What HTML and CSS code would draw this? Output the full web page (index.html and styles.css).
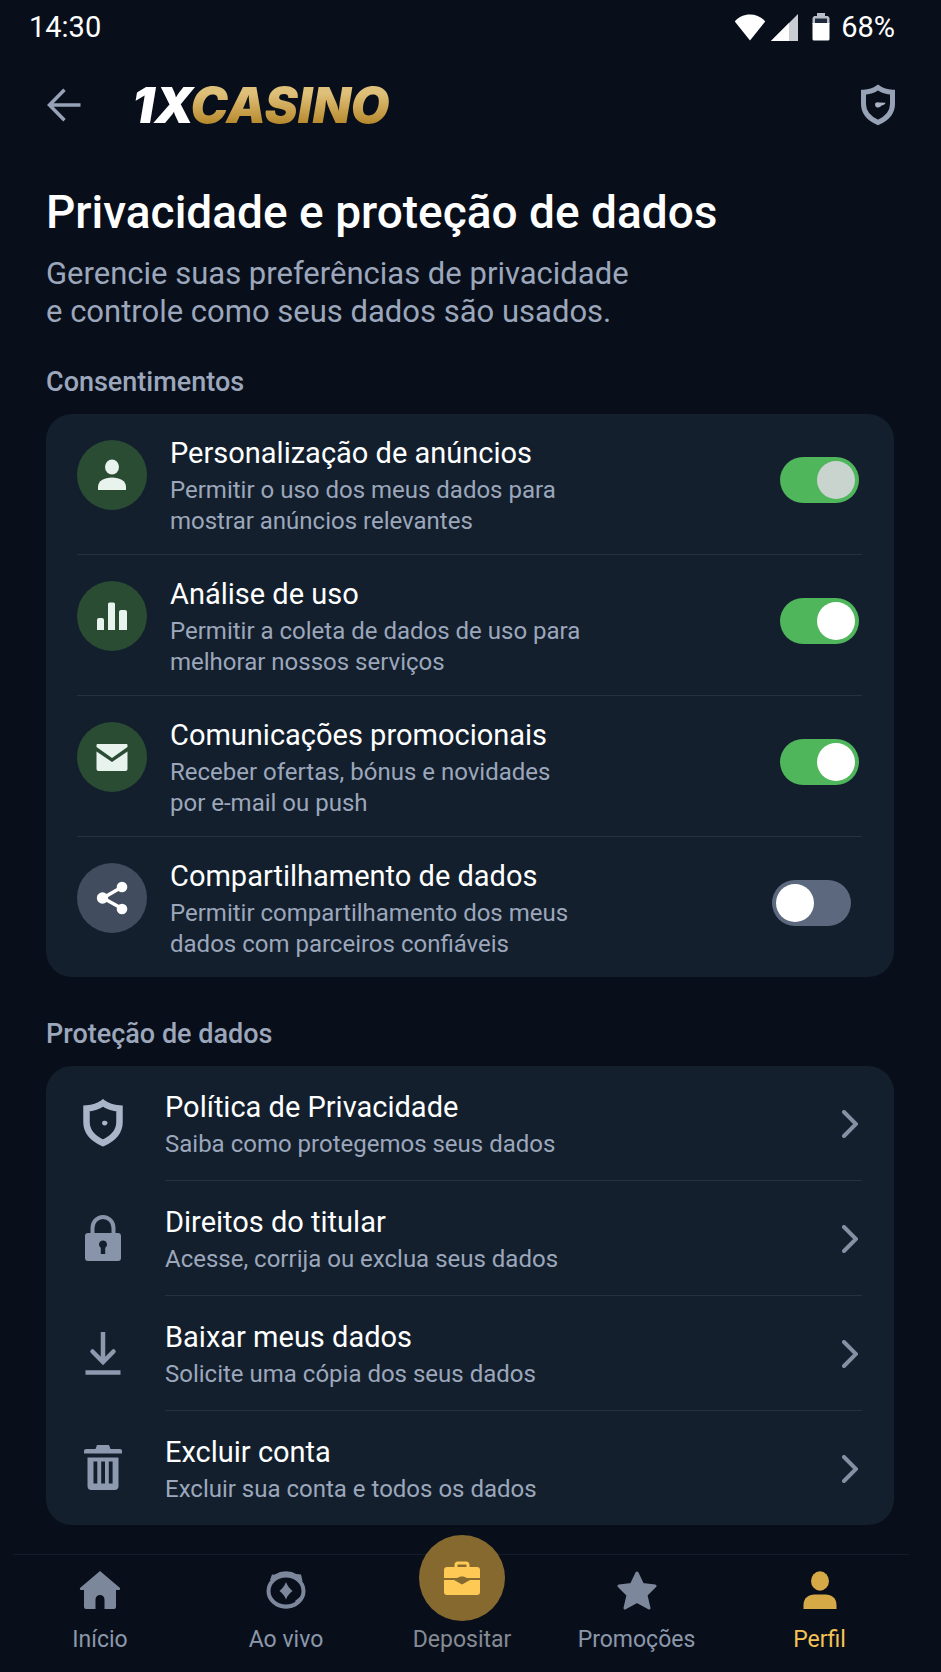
FILE: index.html
```html
<!DOCTYPE html>
<html lang="pt">
<head>
    <meta charset="UTF-8">
    <meta name="viewport" content="width=device-width, initial-scale=1.0">
    <title>Privacidade e proteção de dados</title>
    <link rel="stylesheet" href="styles.css">
</head>
<body>
    <div class="status-bar">
        <span>14:30</span>
        <div class="status-icons">
            <svg class="wifi" width="32" height="27" viewBox="0 0 32 27"><path d="M16 26.500L.8 7.500C4.500 2.800 10 .5 16 .5s11.500 2.300 15.200 7z" fill="#fff"/></svg>
            <svg class="signal" width="27" height="27" viewBox="0 0 27 27"><path d="M0 27L27 0v27z" fill="#c9ccd3"/><path d="M0 27L18 9v18z" fill="#fff"/></svg>
            <svg class="battery" width="18" height="28" viewBox="0 0 18 28"><path d="M5 0h8v3h3l1.500 2v6H.5V5L2 3h3z" fill="#b9bec8"/><path d="M3 5.500h12v5H3z" fill="#1d2a3c"/><path d="M.5 10h17v16a1.500 1.500 0 0 1-1.500 1.500H2A1.500 1.500 0 0 1 .5 26z" fill="#fff"/></svg>
            <span>68%</span>
        </div>
    </div>

    <header class="top-bar">
        <button class="icon-button" aria-label="Voltar">
            <svg width="36" height="36" viewBox="0 0 36 36" fill="none" stroke="#97a2b7" stroke-width="3.500"><path d="M34.500 18H4M18.500 2.800L3.500 18l15 15.200"/></svg>
        </button>
        <div class="logo"><span class="logo-mark">1X</span><span class="logo-name">CASINO</span></div>
        <button class="icon-button shield-button" aria-label="Segurança">
            <svg width="36" height="42" viewBox="0 0 36 42"><path d="M18 3.500C14 6.500 9 8 3.500 8.200V20c0 8.500 5.500 14.500 14.500 18.500C27 34.500 32.500 28.500 32.500 20V8.200C27 8 22 6.500 18 3.500z" fill="none" stroke="#97a2b7" stroke-width="5"/><path d="M15 20.500c0-2 2-2.500 4-2l6.500.3c-.5 2-2.500 2.500-4 2.700-1 1.500-2.500 2-4 2s-2.500-1.500-2.500-3z" fill="#a9b3c5"/></svg>
        </button>
    </header>

    <main>
        <h1>Privacidade e proteção de dados</h1>
        <p class="intro">Gerencie suas preferências de privacidade<br>e controle como seus dados são usados.</p>

        <section>
            <h2>Consentimentos</h2>
            <div class="card">
                <label class="consent">
                    <span class="badge">
                        <svg width="30" height="32" viewBox="0 0 30 32" fill="#e9f3ee"><ellipse cx="15" cy="8" rx="7" ry="7.500"/><path d="M1 31v-3c0-6 6-9.500 14-9.500S29 22 29 28v3z"/></svg>
                    </span>
                    <span class="text">
                        <span class="title">Personalização de anúncios</span>
                        <span class="desc">Permitir o uso dos meus dados para<br>mostrar anúncios relevantes</span>
                    </span>
                    <input type="checkbox" class="switch switch-muted" checked>
                </label>
                <label class="consent">
                    <span class="badge">
                        <svg width="30" height="28" viewBox="0 0 30 28" fill="#e9f3ee"><path d="M0 28V18q0-2 2-2h3q2 0 2 2v10zM11 28V2q0-1.500 1.500-1.500h4Q18 .5 18 2v26zM22 28V10q0-2 2-2h4q2 0 2 2v18z"/></svg>
                    </span>
                    <span class="text">
                        <span class="title">Análise de uso</span>
                        <span class="desc">Permitir a coleta de dados de uso para<br>melhorar nossos serviços</span>
                    </span>
                    <input type="checkbox" class="switch" checked>
                </label>
                <label class="consent">
                    <span class="badge">
                        <svg width="32" height="27" viewBox="0 0 32 27" fill="#e9f3ee"><path d="M1.500 0h29q1 0 1 1v2L16 14 .5 3V1q0-1 1-1z"/><path d="M.5 7.500L16 18 31.500 7.500V25q0 2-2 2h-27q-2 0-2-2z"/></svg>
                    </span>
                    <span class="text">
                        <span class="title">Comunicações promocionais</span>
                        <span class="desc">Receber ofertas, bónus e novidades<br>por e-mail ou push</span>
                    </span>
                    <input type="checkbox" class="switch" checked>
                </label>
                <label class="consent">
                    <span class="badge badge-gray">
                        <svg width="32" height="34" viewBox="0 0 32 34"><path d="M26 6L7 17l19 10.500" fill="none" stroke="#fff" stroke-width="3.500"/><g fill="#fff"><circle cx="26" cy="6" r="5.300"/><circle cx="6.500" cy="17" r="5.700"/><circle cx="26" cy="28" r="5.300"/></g></svg>
                    </span>
                    <span class="text">
                        <span class="title">Compartilhamento de dados</span>
                        <span class="desc">Permitir compartilhamento dos meus<br>dados com parceiros confiáveis</span>
                    </span>
                    <input type="checkbox" class="switch">
                </label>
            </div>
        </section>

        <section>
            <h2>Proteção de dados</h2>
            <div class="card">
                <a class="link-row" href="#politica">
                    <span class="row-icon">
                        <svg width="40" height="48" viewBox="0 0 40 48"><path d="M20 4C15.500 7.300 10 9 3.500 9.500V23c0 9.500 6.500 16.500 16.500 21 10-4.500 16.500-11.500 16.500-21V9.500C30 9 24.500 7.300 20 4z" fill="none" stroke="#a9b5c8" stroke-width="6.500"/><path d="M19 23.500c0-1.500 2-1.800 3-1.800s2.500.8 2.500 2-1 2.800-2.800 2.800S19 25.500 19 23.500z" fill="#a9b5c8"/></svg>
                    </span>
                    <span class="row-body">
                        <span class="text">
                            <span class="title">Política de Privacidade</span>
                            <span class="desc">Saiba como protegemos seus dados</span>
                        </span>
                        <svg class="chevron" width="16" height="28" viewBox="0 0 16 28"><path d="M2 2l12 12L2 26"/></svg>
                    </span>
                </a>
                <a class="link-row" href="#direitos">
                    <span class="row-icon">
                        <svg width="38" height="46" viewBox="0 0 38 46"><path d="M8.500 20V13a10.500 11 0 0 1 21 0v7" fill="none" stroke="#8794a9" stroke-width="4"/><path d="M4 18h30q3 0 3 3v22q0 3-3 3H4q-3 0-3-3V21q0-3 3-3z" fill="#8794a9"/><path d="M19 25.500a4 4 0 0 1 2.200 7.300V39h-4.400v-6.200A4 4 0 0 1 19 25.500z" fill="#131f2d"/></svg>
                    </span>
                    <span class="row-body">
                        <span class="text">
                            <span class="title">Direitos do titular</span>
                            <span class="desc">Acesse, corrija ou exclua seus dados</span>
                        </span>
                        <svg class="chevron" width="16" height="28" viewBox="0 0 16 28"><path d="M2 2l12 12L2 26"/></svg>
                    </span>
                </a>
                <a class="link-row" href="#baixar">
                    <span class="row-icon">
                        <svg width="36" height="44" viewBox="0 0 36 44" fill="none" stroke="#8d99ae" stroke-width="4.500"><path d="M18 1v29" /><path d="M7.500 20.500L18 31l10.500-10.500" stroke-linecap="round"/><path d="M.5 41.500h35"/></svg>
                    </span>
                    <span class="row-body">
                        <span class="text">
                            <span class="title">Baixar meus dados</span>
                            <span class="desc">Solicite uma cópia dos seus dados</span>
                        </span>
                        <svg class="chevron" width="16" height="28" viewBox="0 0 16 28"><path d="M2 2l12 12L2 26"/></svg>
                    </span>
                </a>
                <a class="link-row" href="#excluir">
                    <span class="row-icon">
                        <svg width="38" height="46" viewBox="0 0 38 46"><path d="M13 0h12l1.500 4H36q2 0 2 2v2.500H0V6q0-2 2-2h9.500zM3.500 12.500h31V41q0 4-4 4h-23q-4 0-4-4z" fill="#8d99ae"/><path d="M9.500 16.500h3.800v22H9.500zM17.200 16.500H21v22h-3.800zM24.800 16.500h3.800v22h-3.800z" fill="#131f2d"/></svg>
                    </span>
                    <span class="row-body">
                        <span class="text">
                            <span class="title">Excluir conta</span>
                            <span class="desc">Excluir sua conta e todos os dados</span>
                        </span>
                        <svg class="chevron" width="16" height="28" viewBox="0 0 16 28"><path d="M2 2l12 12L2 26"/></svg>
                    </span>
                </a>
            </div>
        </section>
    </main>

    <nav class="bottom-nav">
        <a href="#inicio">
            <span class="nav-icon"><svg width="42" height="38" viewBox="0 0 42 38"><path d="M21 0l20 17q.8 2-1 2h-3v17q0 2-2 2h-9.500V28.500a4 4 0 0 0-9 0V38H7q-2 0-2-2V19H2q-1.800 0-1-2z" fill="#7c879c"/></svg></span>
            Início
        </a>
        <a href="#aovivo">
            <span class="nav-icon"><svg width="40" height="38" viewBox="0 0 40 38"><ellipse cx="20" cy="20" rx="17.500" ry="15.500" fill="none" stroke="#7c879c" stroke-width="4"/><path d="M9 5Q20-1.500 31 5" fill="none" stroke="#7c879c" stroke-width="3"/><path d="M10 33.500q10 5 20 0" fill="none" stroke="#7c879c" stroke-width="3"/><g fill="#7c879c"><path d="M6 3.500L11 4l-3 6-4-1zM35 3.500L30 3l2 6 4.500 1z"/><path d="M20 11c1.500 4 3.500 6.500 6.500 9-3 2.500-5 4.500-6.500 8.500-1.500-4-3.500-6-6.500-8.500 3-2.500 5-5 6.500-9zM29 30l5-4 1 3-4 3z"/></g></svg></span>
            Ao vivo
        </a>
        <a href="#depositar" class="deposit">
            <span class="nav-circle"><svg width="36" height="34" viewBox="0 0 36 34"><path d="M12 7V4Q12 2 14 2h8q2 0 2 2v3" fill="none" stroke="#fec955" stroke-width="3"/><path d="M3 6h30q3 0 3 3v8H23l-3.500-1.500h-3L13 17H0V9q0-3 3-3zM0 19h10l8 4.500 8-4.500h10v12q0 3-3 3H3q-3 0-3-3z" fill="#fec955"/></svg></span>
            Depositar
        </a>
        <a href="#promocoes">
            <span class="nav-icon"><svg width="40" height="39" viewBox="0 0 40 39"><path d="M20 2l5.500 11.500L38 15l-9 9 3 13-12-6.500L8 37l3-13-9-9 12.500-1.500z" fill="#7c879c" stroke="#7c879c" stroke-width="3" stroke-linejoin="round"/></svg></span>
            Promoções
        </a>
        <a href="#perfil" class="active">
            <span class="nav-icon"><svg width="34" height="38" viewBox="0 0 34 38" fill="#d6a947"><ellipse cx="17" cy="10" rx="9" ry="9.700"/><path d="M.5 38v-4c0-7 5-10.500 11-10.500h11c6 0 11 3.500 11 10.500v4z"/></svg></span>
            Perfil
        </a>
    </nav>
</body>
</html>
```

FILE: styles.css
```css
* {
    box-sizing: border-box;
}

body {
    margin: 0;
    min-height: 100vh;
    display: flex;
    flex-direction: column;
    font-family: Roboto, "Liberation Sans", sans-serif;
    background: #080f1b;
    color: #fff;
}

a {
    color: inherit;
    text-decoration: none;
}

svg {
    display: block;
    flex: none;
}

/* Status bar */
.status-bar {
    display: flex;
    justify-content: space-between;
    padding: 10px 46px 0 29px;
    font-size: 29px;
    line-height: 34px;
}

.status-icons {
    display: flex;
    align-items: center;
}

.signal {
    margin: 0 14px 0 5px;
}

.battery {
    margin-right: 11px;
}

/* Header */
.top-bar {
    display: flex;
    align-items: center;
    height: 60px;
    margin-top: 31px;
    padding: 0 45px 0 46px;
}

.icon-button {
    padding: 0;
    border: none;
    background: none;
    cursor: pointer;
}

.shield-button {
    margin-left: auto;
}

.logo {
    margin-left: 50px;
    font-family: Inter, "Open Sans", sans-serif;
    font-size: 50px;
    line-height: 60px;
    font-weight: 900;
    font-style: italic;
}

.logo-name {
    background: linear-gradient(#dfc07a 30%, #cda654 55%, #b78a2f 80%);
    background-clip: text;
    -webkit-background-clip: text;
    color: transparent;
}

/* Content */
main {
    flex: 1;
    padding: 50px 47px 29px 46px;
}

h1 {
    margin: 0;
    font-size: 46px;
    line-height: 54px;
    font-weight: 500;
}

.intro {
    margin: 16px 0 35px;
    font-size: 31px;
    line-height: 38px;
    color: #9ca7bb;
}

h2 {
    margin: 0 0 16px;
    font-size: 27px;
    line-height: 32px;
    font-weight: 500;
    color: #9ca7bb;
}

section + section {
    margin-top: 41px;
}

.card {
    padding: 0 32px 0 31px;
    border-radius: 26px;
    background: #131f2d;
}

.text {
    flex: 1;
}

.title {
    display: block;
    font-size: 29px;
    line-height: 34px;
}

.desc {
    display: block;
    margin-top: 5px;
    font-size: 24px;
    line-height: 31px;
    color: #9ca7bb;
}

/* Consent rows */
.consent {
    display: flex;
    align-items: flex-start;
    padding: 22px 0 17px;
    cursor: pointer;
}

.consent + .consent {
    border-top: 1px solid #243140;
}

.badge {
    display: flex;
    align-items: center;
    justify-content: center;
    width: 70px;
    height: 70px;
    margin: 4px 23px 0 0;
    border-radius: 50%;
    background: #294c33;
}

.badge-gray {
    background: #414c5f;
}

.switch {
    appearance: none;
    width: 79px;
    height: 46px;
    margin: 21px 3px 0 0;
    padding: 4px;
    border-radius: 23px;
    background: #5b687d;
    cursor: pointer;
}

.switch::before {
    content: "";
    display: block;
    width: 38px;
    height: 38px;
    border-radius: 50%;
    background: #fff;
}

.switch:checked {
    background: #4fb65b;
}

.switch:checked::before {
    margin-left: auto;
}

.switch:not(:checked) {
    margin-right: 11px;
}

.switch-muted::before {
    background: #c9d4ce;
}

/* Link rows */
.link-row {
    display: flex;
    align-items: center;
}

.row-icon {
    display: flex;
    justify-content: center;
    width: 52px;
    margin-right: 36px;
}

.row-body {
    flex: 1;
    display: flex;
    align-items: center;
    padding: 22px 4px 20px 0;
}

.row-body .text {
    padding-top: 2px;
}

.link-row + .link-row .row-body {
    border-top: 1px solid #243140;
}

.chevron {
    fill: none;
    stroke: #8590a4;
    stroke-width: 4;
    stroke-linecap: round;
}

/* Bottom navigation */
.bottom-nav {
    display: grid;
    grid-template-columns: 174fr 198fr 154fr 195fr 171fr;
    align-items: end;
    margin: 0 32px 0 13px;
    padding: 15px 4px 18px 0;
    border-top: 1px solid #131d2a;
    font-size: 23px;
    line-height: 28px;
    color: #8c97aa;
}

.bottom-nav a {
    display: flex;
    flex-direction: column;
    align-items: center;
}

.nav-icon {
    display: flex;
    align-items: center;
    height: 40px;
    margin-bottom: 16px;
}

.nav-circle {
    display: flex;
    align-items: center;
    justify-content: center;
    width: 86px;
    height: 86px;
    margin: -36px 0 5px;
    border-radius: 50%;
    background: #85692f;
}

.bottom-nav .deposit {
    color: #868b93;
}

.bottom-nav .active {
    color: #f4c354;
}
```
